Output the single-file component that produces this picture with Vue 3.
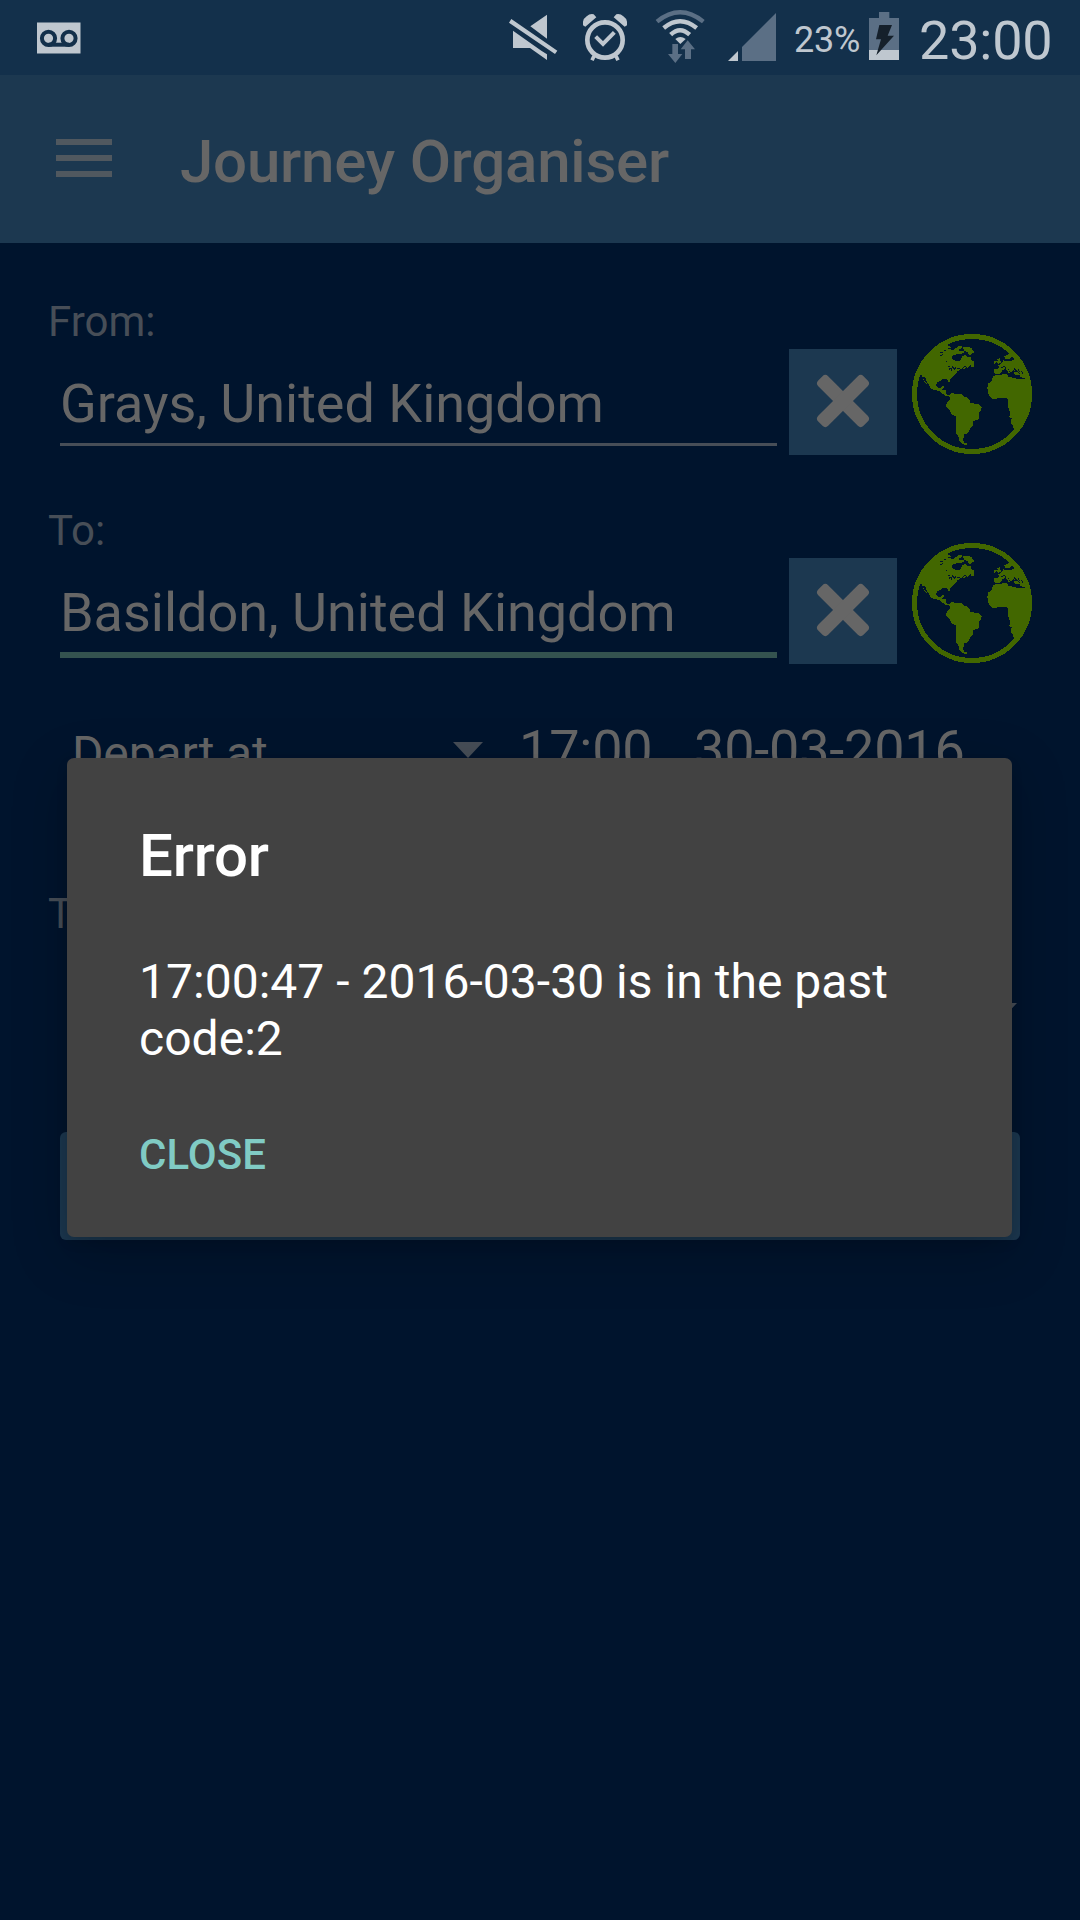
<script setup>
const fields = [
  { label: 'From:', value: 'Grays, United Kingdom', focused: false },
  { label: 'To:', value: 'Basildon, United Kingdom', focused: true },
]
</script>

<template>
  <div class="screen">
    <header class="status">
      <svg class="voicemail" width="44" height="32" viewBox="0 0 44 32">
        <path class="lit" d="M0 .5h43.500v31H0z" />
        <g fill="none" stroke="#13304b" stroke-width="4">
          <circle cx="11.500" cy="16.300" r="6.600" />
          <circle cx="32" cy="16.300" r="6.600" />
          <path d="M11.500 22.700H32" />
        </g>
      </svg>
      <svg class="system" width="286" height="64" viewBox="0 0 858 192">
        <!-- muted speaker -->
        <path class="lit" d="M69 92 154 152 171 163V180L120 144H69zM171 44V116L121 79zM64 57 202 152 195 162 57 68z" />
        <!-- alarm -->
        <g fill="none" stroke="#bfc7cf">
          <circle cx="345" cy="120" r="53" stroke-width="14" />
          <path d="M317 110 339 132 373 97" stroke-width="12" />
          <path d="M312 168 306 181M378 168 384 181" stroke-width="11" />
        </g>
        <path class="lit" d="M279 65Q280 56 290 49 300 40 311 43L319 52 286 80 279 76zM411 65Q410 56 400 49 390 40 379 43L371 52 404 80 411 76z" />
        <!-- wifi -->
        <g fill="none" stroke-width="13">
          <path stroke="#5b6f85" d="M501 65Q570 9 640 65" />
          <path stroke="#bfc7cf" d="M521 84Q570 43 620 84M542 104Q570 77 599 104" />
        </g>
        <path class="lit" d="M556 117Q571 105 587 117L571 132z" />
        <path class="dim" d="M547 132H564V162H577L556 189 534 162H547zM585 177V148H572L593 121 615 148H603V177z" />
        <!-- signal -->
        <path class="lit" d="M714 183 744 153V183z" />
        <path class="dim" d="M756 183V141L858 39V183z" />
      </svg>
      <span class="percent">23%</span>
      <svg class="battery" width="30" height="48" viewBox="0 0 90 144">
        <path class="dim" d="M30 0H61V18H90V114H0V18H30z" />
        <path class="lit" d="M0 114H90V144H0z" />
        <path fill="#15202b" d="M31 39H69L56 71H75L22 130 36 82H21z" />
      </svg>
      <span class="clock">23:00</span>
    </header>

    <div class="appbar">
      <div class="menu"><i></i><i></i><i></i></div>
      <h1>Journey Organiser</h1>
    </div>

    <main>
      <section v-for="f in fields" :key="f.label" class="field">
        <label>{{ f.label }}</label>
        <div class="row">
          <div class="input" :class="{ focused: f.focused }">{{ f.value }}</div>
          <button class="clear">
            <svg width="54" height="54" viewBox="-27 -27 54 54">
              <g fill="#666">
                <rect x="-32" y="-7" width="64" height="14" rx="4" transform="rotate(45)" />
                <rect x="-32" y="-7" width="64" height="14" rx="4" transform="rotate(-45)" />
              </g>
            </svg>
          </button>
          <svg class="globe" width="120" height="120" viewBox="456 72 360 360">
            <circle cx="636" cy="252" r="172.500" fill="none" stroke="#426700" stroke-width="15" />
            <g fill="#426700" fill-rule="evenodd">
              <!-- North and Central America -->
              <path d="M468 198 476 175 497 137 522 113 548 99 567 108 573 112 563 116 580 121 585 116 592 118 601 112 596 124 610 124 605 131 591 132 577 138 575 147 584 151 594 155 602 149 606 139 615 135 621 141 633 141 634 151 641 154 641 169 630 165 621 174 616 167 607 176 600 179 592 184 588 191 579 199 570 208V217H566L562 208 550 207 540 213 530 217 529 229 535 234 543 233 549 227 553 230 547 239 557 241 560 254 570 254 577 258 568 260 555 257 540 245 526 239 513 238 508 226 500 216 497 204 488 200 492 211 500 220 502 225 492 215 487 198 481 194z" />
              <path d="M582 114H591L596 109H607V114L600 118H588zM608 111 635 113 638 121 645 126 636 130 633 136 624 132 625 126 615 124 611 119zM604 123H613V129H604z" />
              <path d="M632 166H642V171H632zM610 173 620 170 618 175 610 177z" />
              <!-- South America -->
              <path d="M569 254 579 247 584 251 603 252 611 260 622 263 629 271 630 279 655 282 665 291 664 300 656 309 657 326 649 331 638 333 639 345 630 357 623 370 610 374 613 381 607 386 612 398 621 401 620 405 608 403 598 394 594 375 589 371 588 320 576 313 567 299 558 288 561 276 571 267z" />
              <!-- Africa -->
              <path d="M699 199 714 194 741 193 745 202 764 203 768 207 798 206 810 222 816 252 810 292 796 328 777 355 762 362 759 348 752 339 755 325 748 322 750 306 743 288 744 269 737 263 697 267 684 251 685 240 682 235 685 221 694 213z" />
              <!-- Europe -->
              <path d="M742 127 752 119 773 143 792 175 800 204 780 202 779 195 765 194 761 188 770 183 759 181 755 187 748 184 744 175 751 191 745 188 737 175 728 180 722 189 716 193 703 190V177L718 175 716 169 710 169 726 159 729 151 743 154 753 152 762 150 762 145 755 141 748 146 735 147 733 139 747 132zM711 147H716L720 142V150L724 159 713 161 709 157 715 152zM704 152 710 154 708 160 702 161z" />
            </g>
            <g fill="none" stroke="#00142d" stroke-width="3">
              <path d="M540 127H550M540 136 550 134M551 119 558 123M557 154 562 157M564 169 570 170M566 178 573 175 574 182M576 169 583 177M587 170 584 180M592 174H601" />
              <path d="M762 176 780 192M774 178 779 186M784 183 788 191M724 174 731 169 739 174" />
            </g>
          </svg>
        </div>
      </section>

      <div class="when">
        <span class="mode">Depart at</span>
        <i class="caret"></i>
        <span class="time">17:00</span>
        <span class="date">30-03-2016</span>
      </div>
      <div class="transport">T</div>
      <div class="select"><i class="caret"></i></div>
      <div class="submit"></div>
    </main>

    <div class="dialog">
      <h2>Error</h2>
      <p>17:00:47 - 2016-03-30 is in the past<br />code:2</p>
      <button class="close">CLOSE</button>
    </div>
  </div>
</template>

<style>
body {
  margin: 0;
  background: #00142d;
}
</style>

<style scoped>
.screen {
  position: relative;
  width: 1080px;
  height: 1920px;
  overflow: hidden;
  background: #00142d;
  color: #666;
  font-family: Roboto, sans-serif;
}
svg {
  display: block;
  flex: none;
}
button {
  border: 0;
  padding: 0;
  font-family: inherit;
}
.lit { fill: #bfc7cf; }
.dim { fill: #5b6f85; }

.status {
  display: flex;
  align-items: flex-start;
  box-sizing: border-box;
  height: 75px;
  background: #13304b;
  color: #bfc7cf;
  white-space: nowrap;
}
.voicemail { margin: 22px 0 0 37px; }
.system { margin-left: 409px; }
.percent {
  width: 76px;
  box-sizing: border-box;
  padding-left: 18px;
  margin-top: 19px;
  font-size: 36px;
  line-height: 42px;
  letter-spacing: -0.2px;
}
.battery { margin: 12px 0 0 17px; }
.clock {
  margin: 9px 0 0 20px;
  font-size: 54px;
  line-height: 64px;
  letter-spacing: -0.2px;
}

.appbar {
  display: flex;
  height: 168px;
  background: #1c3850;
}
.menu {
  display: flex;
  flex-direction: column;
  gap: 10px;
  width: 56px;
  margin: 64px 0 0 56px;
}
.menu i {
  height: 6px;
  background: #50585f;
}
h1 {
  margin: 52px 0 0 68px;
  font-size: 60px;
  font-weight: 500;
  line-height: 70px;
  letter-spacing: -0.22px;
}

main {
  display: flex;
  flex-direction: column;
}
.field {
  height: 209px;
}
.field label {
  display: block;
  height: 49px;
  padding: 54px 0 0 48px;
  color: #474e57;
  font-size: 42px;
  line-height: 49px;
}
.row {
  display: flex;
  align-items: flex-start;
}
.input {
  box-sizing: border-box;
  width: 717px;
  height: 100px;
  margin-left: 60px;
  padding-top: 26px;
  border-bottom: 3px solid #474e57;
  font-size: 54px;
  line-height: 64px;
  letter-spacing: -0.02px;
  white-space: nowrap;
}
.input.focused {
  height: 103px;
  border-bottom: 6px solid #34534f;
}
.clear {
  display: flex;
  align-items: center;
  justify-content: center;
  width: 108px;
  height: 106px;
  margin: 3px 0 0 12px;
  background: #1c3850;
}
.clear svg { margin-top: -2px; }
.globe {
  margin: -12px 0 0 15px;
  shape-rendering: crispEdges;
}
.when {
  display: flex;
  height: 100px;
  padding-top: 57px;
  white-space: nowrap;
}
.mode {
  width: 381px;
  margin: 8px 0 0 72px;
  font-size: 48px;
  line-height: 56px;
  letter-spacing: -0.15px;
}
.caret {
  width: 30px;
  height: 16px;
  background: #474e57;
  clip-path: polygon(0 0, 100% 0, 50% 100%);
}
.when .caret { margin-top: 24px; }
.time, .date {
  font-size: 54px;
  line-height: 64px;
  letter-spacing: -0.2px;
}
.time { width: 175px; margin-left: 36px; }
.transport {
  margin: 71px 0 0 48px;
  color: #474e57;
  font-size: 42px;
  line-height: 49px;
}
.select {
  display: flex;
  justify-content: flex-end;
  height: 129px;
  margin: 65px 63px 0 0;
}
.submit {
  height: 108px;
  margin: 0 60px;
  border-radius: 6px;
  background: #1c3850;
}

.dialog {
  position: absolute;
  left: 67px;
  top: 758px;
  box-sizing: border-box;
  width: 945px;
  height: 479px;
  padding: 63px 72px 0;
  border-radius: 7px;
  background: #424242;
  color: #fff;
  box-shadow: 0 16px 56px rgba(0, 0, 0, 0.22), 0 6px 12px rgba(0, 0, 0, 0.1);
}
h2 {
  margin: 0;
  font-size: 60px;
  font-weight: 500;
  line-height: 70px;
  letter-spacing: -0.2px;
}
p {
  margin: 62px 0 0;
  font-size: 48px;
  line-height: 57px;
  letter-spacing: 0.03px;
}
.close {
  display: block;
  margin-top: 63px;
  background: none;
  color: #80cbc4;
  font-size: 42px;
  font-weight: 500;
  line-height: 49px;
}
</style>
